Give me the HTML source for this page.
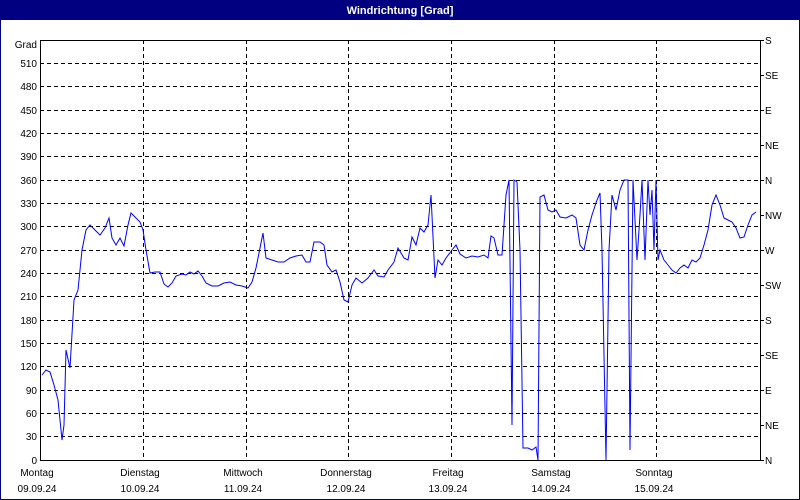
<!DOCTYPE html>
<html><head><meta charset="utf-8"><style>
html,body{margin:0;padding:0;background:#fff}
svg{display:block}
text{font-family:"Liberation Sans",sans-serif;font-size:10px;fill:#000}
</style></head><body>
<svg width="800" height="500" xmlns="http://www.w3.org/2000/svg">
<rect x="0" y="0" width="800" height="500" fill="#fff"/>
<rect x="0.5" y="0.5" width="799" height="499" fill="none" stroke="#000080"/>
<rect x="0" y="0" width="800" height="20" fill="#000080"/>
<text x="400" y="14" text-anchor="middle" style="fill:#fff;font-weight:bold;font-size:11px">Windrichtung [Grad]</text>
<g stroke="#000" stroke-dasharray="4,3" stroke-width="1">
<line x1="40" x2="760" y1="63.5" y2="63.5"/><line x1="40" x2="760" y1="86.5" y2="86.5"/>
<line x1="40" x2="760" y1="110.5" y2="110.5"/><line x1="40" x2="760" y1="133.5" y2="133.5"/>
<line x1="40" x2="760" y1="156.5" y2="156.5"/><line x1="40" x2="760" y1="180.5" y2="180.5"/>
<line x1="40" x2="760" y1="203.5" y2="203.5"/><line x1="40" x2="760" y1="226.5" y2="226.5"/>
<line x1="40" x2="760" y1="250.5" y2="250.5"/><line x1="40" x2="760" y1="273.5" y2="273.5"/>
<line x1="40" x2="760" y1="296.5" y2="296.5"/><line x1="40" x2="760" y1="320.5" y2="320.5"/>
<line x1="40" x2="760" y1="343.5" y2="343.5"/><line x1="40" x2="760" y1="366.5" y2="366.5"/>
<line x1="40" x2="760" y1="390.5" y2="390.5"/><line x1="40" x2="760" y1="413.5" y2="413.5"/>
<line x1="40" x2="760" y1="436.5" y2="436.5"/>
<line x1="143.5" x2="143.5" y1="40" y2="460"/><line x1="246.5" x2="246.5" y1="40" y2="460"/>
<line x1="348.5" x2="348.5" y1="40" y2="460"/><line x1="451.5" x2="451.5" y1="40" y2="460"/>
<line x1="554.5" x2="554.5" y1="40" y2="460"/><line x1="656.5" x2="656.5" y1="40" y2="460"/>
</g>
<g stroke="#000">
<line x1="40.5" y1="40" x2="40.5" y2="460.5"/>
<line x1="40" y1="40.5" x2="760" y2="40.5"/>
<line x1="760.5" y1="40" x2="760.5" y2="460.5"/>
<line x1="40" y1="460.5" x2="764" y2="460.5"/>
<path d="M760 40.5h4M760 75.5h4M760 110.5h4M760 145.5h4M760 180.5h4M760 215.5h4M760 250.5h4M760 285.5h4M760 320.5h4M760 355.5h4M760 390.5h4M760 425.5h4"/>
</g>
<g text-anchor="end">
<text x="37" y="48">Grad</text>
<text x="37" y="67">510</text><text x="37" y="90">480</text><text x="37" y="114">450</text>
<text x="37" y="137">420</text><text x="37" y="160">390</text><text x="37" y="184">360</text>
<text x="37" y="207">330</text><text x="37" y="230">300</text><text x="37" y="254">270</text>
<text x="37" y="277">240</text><text x="37" y="300">210</text><text x="37" y="324">180</text>
<text x="37" y="347">150</text><text x="37" y="370">120</text><text x="37" y="394">90</text>
<text x="37" y="417">60</text><text x="37" y="440">30</text><text x="37" y="464">0</text>
</g>
<g>
<text x="765" y="44">S</text><text x="765" y="79">SE</text><text x="765" y="114">E</text>
<text x="765" y="149">NE</text><text x="765" y="184">N</text><text x="765" y="219">NW</text>
<text x="765" y="254">W</text><text x="765" y="289">SW</text><text x="765" y="324">S</text>
<text x="765" y="359">SE</text><text x="765" y="394">E</text><text x="765" y="429">NE</text>
<text x="765" y="464">N</text>
</g>
<g text-anchor="middle">
<text x="37" y="476">Montag</text><text x="37" y="492">09.09.24</text>
<text x="140" y="476">Dienstag</text><text x="140" y="492">10.09.24</text>
<text x="243" y="476">Mittwoch</text><text x="243" y="492">11.09.24</text>
<text x="346" y="476">Donnerstag</text><text x="346" y="492">12.09.24</text>
<text x="448" y="476">Freitag</text><text x="448" y="492">13.09.24</text>
<text x="551" y="476">Samstag</text><text x="551" y="492">14.09.24</text>
<text x="654" y="476">Sonntag</text><text x="654" y="492">15.09.24</text>
</g>
<polyline fill="none" stroke="#0000ff" stroke-width="1" points="42,375 46,370 50,372 54,385 58,400 62,440 64,425 66,350 70,368 74,300 78,290 82,250 86,230 90,225 95,230 100,235 105,228 109,218 112,238 116,245 120,238 124,246 128,225 131,213 136,218 140,222 143,230 146,250 150,273 155,272 160,272 164,284 168,287 172,283 176,276 182,274 186,275 190,272 194,274 198,271 202,276 206,283 212,286 218,286 224,283 230,282 236,285 242,286 248,288 252,282 256,268 260,248 263,233 266,258 272,260 278,262 284,262 290,258 296,256 302,255 306,262 310,262 314,242 320,242 324,245 327,265 332,272 336,270 340,282 344,300 348,302 352,285 356,278 362,283 368,278 374,270 378,276 384,277 388,270 394,262 398,248 404,258 408,260 412,237 416,245 420,228 424,232 428,225 431,195 435,278 438,260 442,265 446,258 452,250 456,245 460,254 466,258 472,256 478,257 484,255 488,258 491,236 494,238 498,255 502,255 506,195 509,180 512,425 514,180 517,182 520,250 523,448 528,448 532,450 536,447 538,460 540,197 544,195 548,210 552,212 556,210 560,217 566,218 572,215 576,218 580,245 584,250 588,230 592,215 597,200 600,193 602,250 606,460 609,250 612,195 616,210 620,190 624,180 628,180 630,450 633,180 637,260 640,215 642,180 645,260 648,180 650,215 652,190 654,250 656,180 658,260 660,250 664,260 668,265 672,270 676,273 680,268 684,265 688,268 692,260 696,262 700,258 704,245 708,230 712,205 716,195 720,205 724,218 728,220 732,222 736,228 740,238 744,237 748,225 752,215 756,212"/>
</svg>
</body></html>
